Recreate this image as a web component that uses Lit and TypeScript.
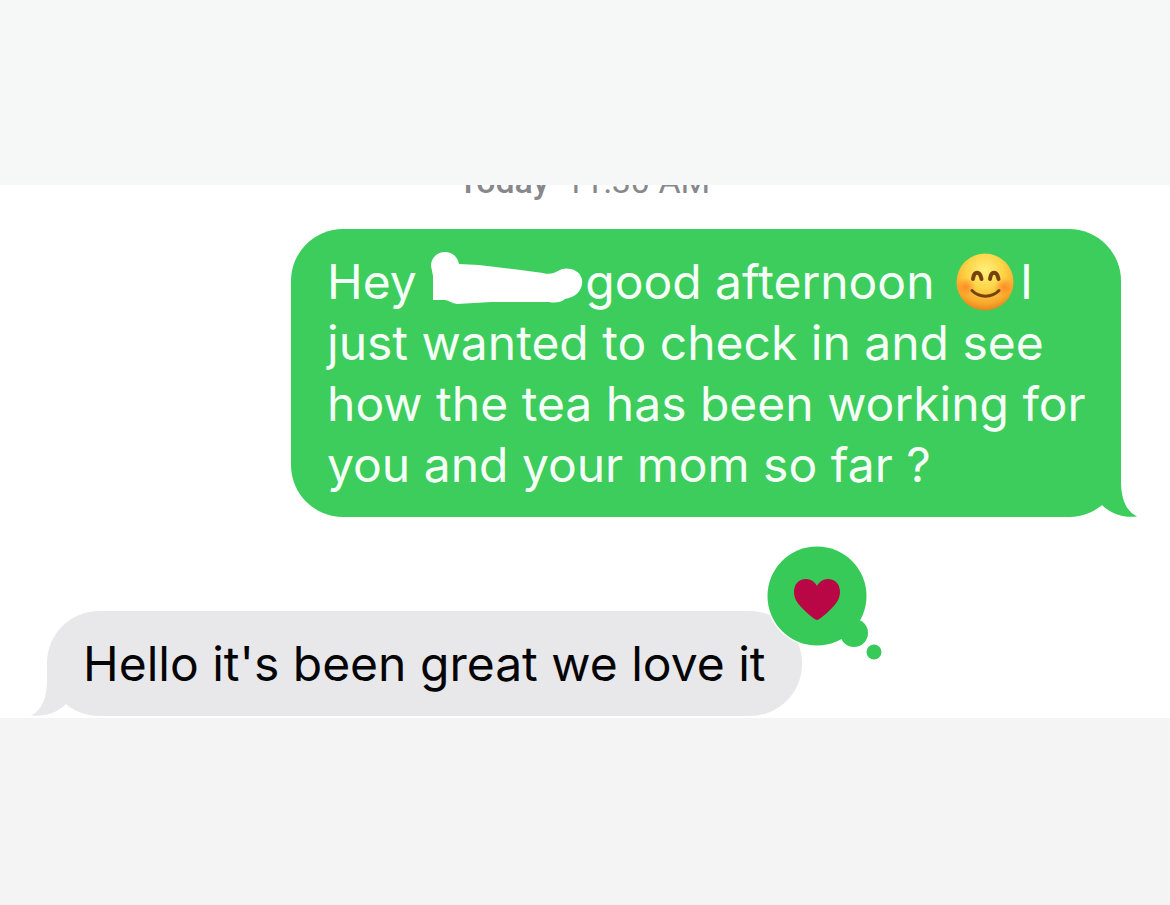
import { LitElement, html, css } from "lit";
import { customElement } from "lit/decorators.js";

@customElement("app-root")
export class AppRoot extends LitElement {
  static styles = css`
    :host {
      display: flex;
      flex-direction: column;
      min-height: 100vh;
      background: #f4f4f4;
      font-family: Inter, Roboto, sans-serif;
      font-size: 48px;
      line-height: 61px;
    }
    .band {
      height: 185px;
      background: #f6f8f7;
    }
    .thread {
      display: flex;
      flex-direction: column;
      background: #fff;
      padding: 0 49px 2px 47px;
      overflow: hidden;
    }
    .stamp {
      display: flex;
      gap: 16px;
      align-self: center;
      margin: -24px 0 28px;
      font-family: Roboto, Inter, sans-serif;
      font-size: 34px;
      line-height: 40px;
      color: #87888c;
    }
    .stamp b {
      font-weight: 500;
    }
    .bubble {
      position: relative;
      box-sizing: border-box;
      margin: 0;
      border-radius: 52px;
      padding: 22px 36px;
    }
    .sent {
      align-self: flex-end;
      width: 830px;
      max-width: 100%;
      padding-right: 32px;
      margin-bottom: 94px;
      background: #3ccd5c;
      color: #f6fff7;
    }
    .received {
      align-self: flex-start;
      background: #e8e8ea;
      color: #050507;
    }
    .tail {
      position: absolute;
      bottom: 0;
      width: 48px;
      height: 60px;
    }
    .sent .tail {
      right: -16px;
      fill: #3ccd5c;
    }
    .received .tail {
      left: -16px;
      fill: #e8e8ea;
      transform: scaleX(-1);
    }
    .redacted {
      width: 152px;
      height: 54px;
      margin: 0 2px 0 1px;
      vertical-align: -7px;
      fill: #fff;
    }
    .emoji {
      width: 58px;
      height: 58px;
      margin: 0 6px 0 8px;
      vertical-align: -12px;
    }
    .reaction {
      position: absolute;
      right: -82px;
      top: -66px;
      width: 118px;
      height: 118px;
    }
  `;

  private tail() {
    return html`<svg class="tail" viewBox="0 0 48 60" aria-hidden="true">
      <path d="M0 6H32V24C32 42 37 54 48 59.500C34 61 22 57 13 48L0 40Z" />
    </svg>`;
  }

  private redacted() {
    return html`<svg class="redacted" viewBox="0 0 152 54" aria-hidden="true">
      <path
        d="M0 14C0 6 6 0 14 0C21 0 27 5 28 12L48 13L82 17L112 21C119 23 123 21 127 19C131 16 136 16 140 17C148 19 152 25 151 32C150 39 145 44 138 46L134 47C129 51 124 51 118 50L60 50L26 52C20 51 17 48 14 48L2 48V24Z"
      />
    </svg>`;
  }

  private emoji() {
    return html`<svg class="emoji" viewBox="0 0 58 58" role="img" aria-label="Smiling face">
      <defs>
        <radialGradient id="face" cx="50%" cy="30%" r="72%">
          <stop offset="0" stop-color="#fff07a" />
          <stop offset=".45" stop-color="#fdd447" />
          <stop offset=".8" stop-color="#f9a82c" />
          <stop offset="1" stop-color="#e0801c" />
        </radialGradient>
        <radialGradient id="blush">
          <stop offset="0" stop-color="#ff7a22" stop-opacity=".75" />
          <stop offset="1" stop-color="#ff7a22" stop-opacity="0" />
        </radialGradient>
      </defs>
      <circle cx="29" cy="29" r="28.5" fill="url(#face)" />
      <ellipse cx="10" cy="34" rx="10" ry="9" fill="url(#blush)" />
      <ellipse cx="48" cy="34" rx="10" ry="9" fill="url(#blush)" />
      <g fill="none" stroke="#75420f" stroke-linecap="round">
        <path d="M17 26C18 17.500 24 17.500 25.500 26M34 26C35 17.500 41 17.500 42.500 26" stroke-width="4" />
        <path d="M16 37.500C23 45 36 45 43 37.500" stroke-width="3" />
      </g>
    </svg>`;
  }

  private reaction() {
    return html`<svg class="reaction" viewBox="0 0 118 118" role="img" aria-label="Loved">
      <circle cx="51" cy="51" r="51" fill="#fff" />
      <g fill="#37ca58">
        <circle cx="51" cy="51" r="49.5" />
        <circle cx="88" cy="88" r="14" />
        <circle cx="108" cy="107" r="7.5" />
      </g>
      <path
        d="M51 75C49 75 42 69 36 63C31 58 28 53 28 47C28 39 33 34 40 34C45 34 49 37 51 41C53 37 57 34 62 34C69 34 74 39 74 47C74 53 71 58 66 63C60 69 53 75 51 75Z"
        fill="#b90745"
      />
    </svg>`;
  }

  render() {
    return html`
      <div class="band"></div>
      <main class="thread">
        <time class="stamp"><b>Today</b><span>11:30 AM</span></time>
        <p class="bubble sent">
          Hey ${this.redacted()}good afternoon ${this.emoji()}I just wanted to
          check in and see how the tea has been working for you and your mom so
          far ?${this.tail()}
        </p>
        <p class="bubble received">
          Hello it's been great we love it${this.tail()}${this.reaction()}
        </p>
      </main>
    `;
  }
}
